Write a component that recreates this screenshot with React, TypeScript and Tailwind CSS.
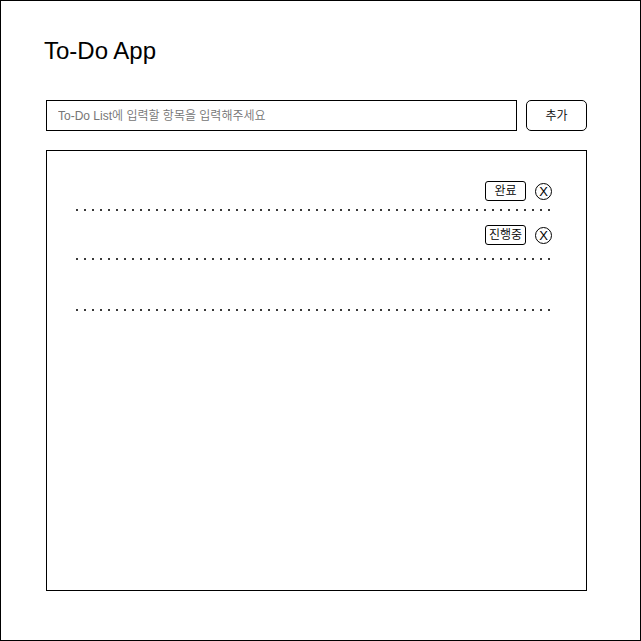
import { useState } from "react";

type Todo = { id: number; status: string | null; gap: string; dotGap: string };

const todos: Todo[] = [
    { id: 1, status: "완료", gap: "mt-[30px]", dotGap: "mt-[8px]" },
    { id: 2, status: "진행중", gap: "mt-[14px]", dotGap: "mt-[13px]" },
    { id: 3, status: null, gap: "mt-[14px]", dotGap: "mt-[15px]" },
];

function Dots() {
    return <div className="h-[2px] w-full bg-[linear-gradient(to_right,#3a3a3a_2px,transparent_2px)] bg-size-[8px_2px]" />;
}

export default function App() {
    const [text, setText] = useState("");

    return (
        <div className="w-[641px] h-[641px] border border-black bg-white text-black font-['Liberation_Sans','Noto_Sans_CJK_KR',sans-serif]">
            <h1 className="ml-[43px] mt-[34px] text-2xl leading-8">To-Do App</h1>

            <div className="ml-[45px] mt-[33px] flex gap-[9px]">
                <input
                    className="w-[471px] h-[31px] border border-black pl-[11px] text-xs font-[350] outline-none placeholder:text-[#757575]"
                    placeholder="To-Do List에 입력할 항목을 입력해주세요"
                    value={text}
                    onChange={(e) => setText(e.target.value)}
                />
                <button className="w-[61px] h-[31px] border border-black rounded-[5px] text-xs font-[350]">추가</button>
            </div>

            <div className="ml-[45px] mt-[19px] w-[541px] h-[441px] border border-black pl-[29px] pr-[34px]">
                {todos.map((t) => (
                    <div key={t.id} className={t.gap}>
                        <div className="h-[20px] flex items-center justify-end gap-[9px]">
                            {t.status ? (
                                <>
                                    <span className="h-[20px] min-w-[41px] px-[3px] flex items-center justify-center border border-black rounded-[3px] text-xs font-[350]">
                                        {t.status}
                                    </span>
                                    <span className="w-[17px] h-[17px] flex items-center justify-center border border-black rounded-full text-[13px] leading-none">
                                        X
                                    </span>
                                </>
                            ) : null}
                        </div>
                        <div className={t.dotGap}>
                            <Dots />
                        </div>
                    </div>
                ))}
            </div>
        </div>
    );
}
